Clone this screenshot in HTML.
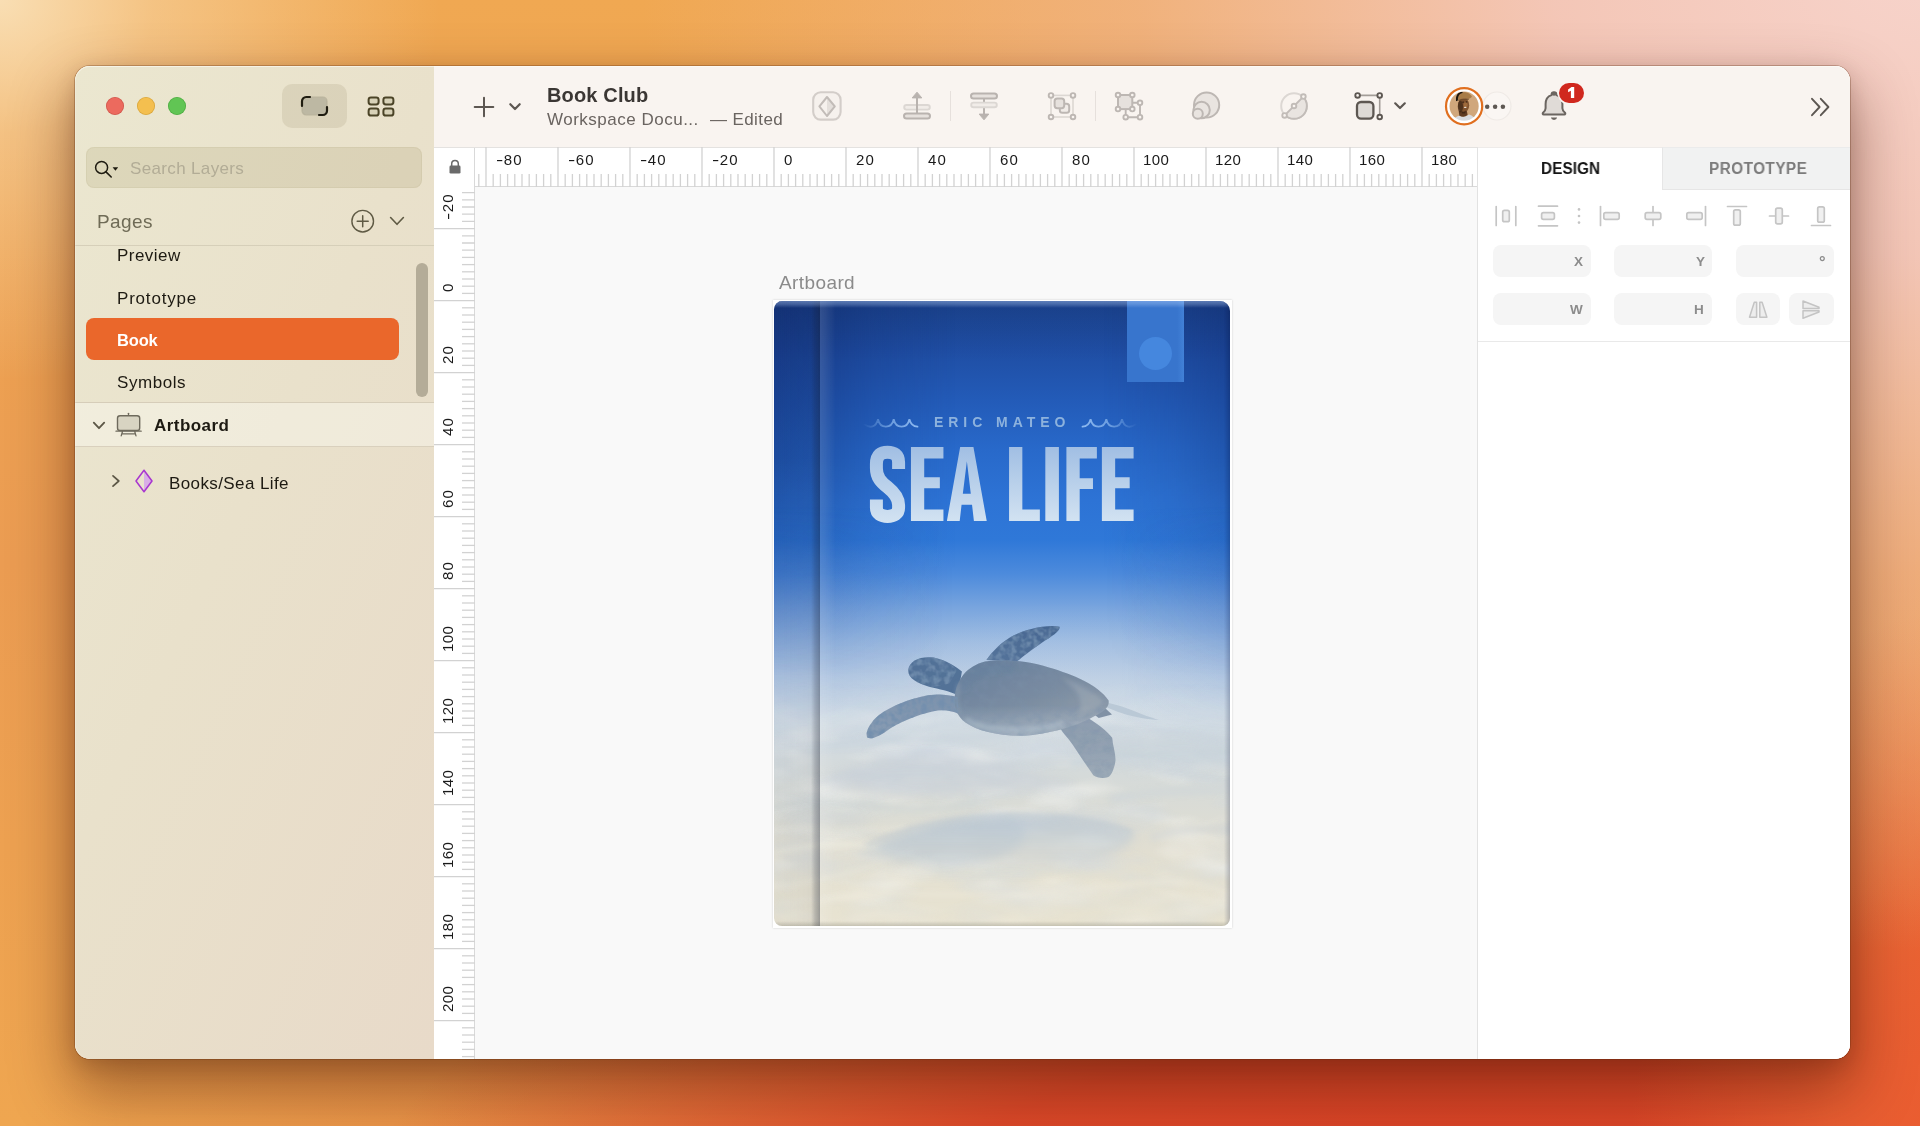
<!DOCTYPE html>
<html><head><meta charset="utf-8">
<style>
*{margin:0;padding:0;box-sizing:border-box}
html,body{width:1920px;height:1126px;overflow:hidden}
body{font-family:"Liberation Sans",sans-serif;position:relative;
background:
 radial-gradient(ellipse 440px 380px at 0px 0px,rgba(250,228,190,.9) 0%,rgba(250,228,190,.45) 35%,rgba(250,228,190,0) 100%),
 radial-gradient(ellipse 1300px 990px at 1940px -40px,#f7d4cc 0%,rgba(244,200,188,.95) 30%,rgba(241,184,150,.6) 62%,rgba(240,170,120,0) 100%),
 radial-gradient(ellipse 330px 560px at 1960px 1170px,#ea5c30 0%,rgba(234,96,50,.9) 40%,rgba(236,120,64,0) 100%),
 radial-gradient(ellipse 1050px 330px at 1420px 1190px,#da4226 0%,rgba(220,70,40,.95) 45%,rgba(224,84,44,0) 100%),
 radial-gradient(ellipse 1500px 700px at 1500px 1250px,rgba(226,96,48,.85) 0%,rgba(228,110,56,.5) 55%,rgba(230,120,60,0) 100%),
 linear-gradient(180deg,#f0a852 0%,#eb9c52 50%,#efa650 100%);
}
.abs{position:absolute}
#win{position:absolute;left:75px;top:66px;width:1775px;height:993px;border-radius:15px;
 box-shadow:0 0 0 1px rgba(90,40,10,.28),0 28px 60px 5px rgba(60,15,0,.42),0 6px 20px rgba(60,20,0,.17);}
#winin{position:absolute;inset:0;border-radius:15px;overflow:hidden;background:#fff}
#winin:after{content:"";position:absolute;inset:0;border-radius:15px;box-shadow:inset 0 1px 0 rgba(255,255,250,.55),inset 1px 0 0 rgba(255,255,250,.2);z-index:20;pointer-events:none}
/* sidebar */
#side{position:absolute;left:0;top:0;width:359px;height:993px;
 background:linear-gradient(115deg,#ebe7d0 0%,#e9e1cb 45%,#e8dac9 100%);}
#main{position:absolute;left:359px;top:0;right:0;height:993px;background:#f9f9f9}
#tb{position:absolute;left:0;top:0;right:0;height:81px;background:#f9f4f0}
.t{position:absolute;white-space:nowrap;line-height:1;will-change:transform}
</style></head>
<body>
<div id="win"><div id="winin">
<!--SIDEBAR-->
<div id="side">
<!-- traffic lights -->
<div class="abs" style="left:31px;top:30.700px;width:18.100px;height:18.100px;border-radius:50%;background:#ec6a5e;box-shadow:inset 0 0 0 .8px rgba(160,50,40,.35)"></div>
<div class="abs" style="left:62px;top:30.700px;width:18.100px;height:18.100px;border-radius:50%;background:#f4bf4f;box-shadow:inset 0 0 0 .8px rgba(170,120,20,.35)"></div>
<div class="abs" style="left:93px;top:30.700px;width:18.100px;height:18.100px;border-radius:50%;background:#61c554;box-shadow:inset 0 0 0 .8px rgba(40,130,30,.35)"></div>
<!-- view toggle -->
<div class="abs" style="left:207px;top:18px;width:65px;height:44px;border-radius:10px;background:rgba(120,110,70,.13)"></div>
<svg class="abs" style="left:224px;top:28px" width="31" height="24" viewBox="0 0 31 24">
 <rect x="3.2" y="3.2" width="24.600" height="17.600" rx="4.200" fill="#bdb8a3"/>
 <rect x="3" y="3" width="25" height="18" rx="4.200" fill="none" stroke="#a9a48e" stroke-width="1.200" opacity=".6"/>
 <path d="M11 3H7.200A4.200 4.200 0 0 0 3 7.200V12" fill="none" stroke="#1f1c10" stroke-width="2.200" stroke-linecap="round"/>
 <path d="M20 21H23.800A4.200 4.200 0 0 0 28 16.800V13" fill="none" stroke="#1f1c10" stroke-width="2.200" stroke-linecap="round"/>
</svg>
<svg class="abs" style="left:291px;top:29px" width="30" height="23" viewBox="0 0 30 23">
 <g fill="#d8d2b8" stroke="#4b4427" stroke-width="2">
 <rect x="2.6" y="2.4" width="10" height="7" rx="2.4"/><rect x="17.4" y="2.4" width="10" height="7" rx="2.4"/>
 <rect x="2.6" y="13.6" width="10" height="7" rx="2.4"/><rect x="17.4" y="13.6" width="10" height="7" rx="2.4"/></g>
</svg>
<!-- search -->
<div class="abs" style="left:11px;top:80.800px;width:336px;height:41.700px;border-radius:8px;background:rgba(150,135,80,.16);box-shadow:inset 0 0 0 1px rgba(140,125,80,.08)"></div>
<svg class="abs" style="left:18px;top:92px" width="30" height="22" viewBox="0 0 30 22">
 <circle cx="8.600" cy="9.400" r="6" fill="none" stroke="#1e1b10" stroke-width="1.500"/>
 <path d="M13 13.900L18.200 19" stroke="#1e1b10" stroke-width="1.600" stroke-linecap="round"/>
 <path d="M19.6 9.3h5.6l-2.8 3.4z" fill="#1e1b10"/>
</svg>
<div class="t" style="left:54.5px;top:93.5px;font-size:17px;letter-spacing:.35px;color:#b2ac96">Search Layers</div>
<!-- pages header -->
<div class="t" style="left:21.5px;top:146px;font-size:19px;letter-spacing:.4px;color:#6f6b56">Pages</div>
<svg class="abs" style="left:274px;top:142px" width="28" height="28" viewBox="0 0 28 28">
 <circle cx="13.7" cy="13.2" r="10.8" fill="none" stroke="#5f5a44" stroke-width="1.4"/>
 <path d="M13.7 7.7v11M8.2 13.2h11" stroke="#5f5a44" stroke-width="1.5" stroke-linecap="round"/>
</svg>
<svg class="abs" style="left:313px;top:149px" width="18" height="12" viewBox="0 0 18 12">
 <path d="M2.6 2.5L9 9.3L15.4 2.5" fill="none" stroke="#5f5a44" stroke-width="1.6" stroke-linecap="round" stroke-linejoin="round"/>
</svg>
<div class="abs" style="left:0;top:179px;width:359px;height:1px;background:#d6cfb9"></div>
<!-- pages list -->
<div class="t" style="left:41.800px;top:181.400px;font-size:17px;letter-spacing:.450px;color:#1d1a12">Preview</div>
<div class="t" style="left:41.800px;top:223.600px;font-size:17px;letter-spacing:.800px;color:#1d1a12">Prototype</div>
<div class="abs" style="left:11px;top:252px;width:312.5px;height:41.5px;border-radius:8px;background:#ea672b"></div>
<div class="t" style="left:41.800px;top:265.900px;font-size:16.500px;letter-spacing:-.150px;color:#fff;font-weight:bold">Book</div>
<div class="t" style="left:41.800px;top:307.700px;font-size:17px;letter-spacing:.570px;color:#1d1a12">Symbols</div>
<div class="abs" style="left:341px;top:197px;width:11.5px;height:134px;border-radius:6px;background:#b4ac98"></div>
<!-- layer list -->
<div class="abs" style="left:0;top:336px;width:359px;height:45px;background:rgba(255,255,250,.35);border-top:1px solid #d6cdb9;border-bottom:1px solid #d9d0bd"></div>
<svg class="abs" style="left:16px;top:353px" width="16" height="12" viewBox="0 0 16 12">
 <path d="M2.800 3.600L8 9.200L13.200 3.600" fill="none" stroke="#5c5746" stroke-width="1.800" stroke-linecap="round" stroke-linejoin="round"/>
</svg>
<svg class="abs" style="left:40px;top:346px" width="28" height="26" viewBox="0 0 28 26">
 <path d="M13.500 1.300v2.600" stroke="#6e6a5c" stroke-width="1.300" stroke-linecap="round"/>
 <rect x="2.500" y="3.700" width="22.200" height="14.800" rx="2.600" fill="#d8d4c2" stroke="#6e6a5c" stroke-width="1.400"/>
 <path d="M1 19.200H26.200M7.400 19.800L6.200 23.900M19.800 19.800l1.200 4.100M6.900 21.900h13.400" stroke="#6e6a5c" stroke-width="1.300" stroke-linecap="round" fill="none"/>
</svg>
<div class="t" style="left:78.5px;top:350.5px;font-size:17px;letter-spacing:.45px;color:#1d1a12;font-weight:bold">Artboard</div>
<svg class="abs" style="left:35px;top:408px" width="12" height="14" viewBox="0 0 12 14">
 <path d="M3 1.8L8.8 7L3 12.2" fill="none" stroke="#5c5746" stroke-width="1.7" stroke-linecap="round" stroke-linejoin="round"/>
</svg>
<svg class="abs" style="left:58px;top:402px" width="22" height="26" viewBox="0 0 22 26">
 <path d="M11 2.2L19 13L11 23.8z" fill="#d9aee6"/>
 <path d="M11 2.2L19 13L11 23.8L3 13z" fill="none" stroke="#a836cf" stroke-width="1.5" stroke-linejoin="round"/>
</svg>
<div class="t" style="left:93.700px;top:409px;font-size:17px;letter-spacing:.400px;color:#1d1a12">Books/Sea Life</div>
</div>
<!--MAIN-->
<div id="main">
<div id="tb">
<!-- plus -->
<svg class="abs" style="left:37.8px;top:28.6px" width="24" height="24" viewBox="0 0 24 24"><path d="M12 2.700v18.600M2.700 12h18.600" stroke="#5d5752" stroke-width="2" stroke-linecap="round"/></svg>
<svg class="abs" style="left:73.4px;top:34.8px" width="16" height="12" viewBox="0 0 16 12"><path d="M3.300 3.200L8 8L12.700 3.200" fill="none" stroke="#5d5752" stroke-width="2.200" stroke-linecap="round" stroke-linejoin="round"/></svg>
<div class="t" style="left:113px;top:19.3px;font-size:20px;font-weight:bold;letter-spacing:.15px;color:#3b3734">Book Club</div>
<div class="t" style="left:113px;top:45.2px;font-size:17px;letter-spacing:.5px;color:#6a6460">Workspace Docu...</div>
<div class="t" style="left:275.5px;top:45.2px;font-size:17px;letter-spacing:.4px;color:#6a6460">&mdash;&nbsp;Edited</div>
<svg class="abs" style="left:376px;top:23px" width="34" height="34" viewBox="0 0 34 34">
<rect x="3.2" y="3.2" width="27.4" height="27.4" rx="7.5" fill="#f6f1ed" stroke="#d3cdc9" stroke-width="2.1"/>
<path d="M17 8.2L24.6 17L17 27z" fill="#e4dfdb"/>
<path d="M17 8L24.8 17.4L17 27L9.4 17.4z" fill="none" stroke="#c2bcb8" stroke-width="2" stroke-linejoin="round"/>
</svg><svg class="abs" style="left:466px;top:23px" width="34" height="34" viewBox="0 0 34 34">
<rect x="4.2" y="16" width="25.6" height="4.6" rx="2.3" fill="#f1ece8" stroke="#dcd7d3" stroke-width="1.9"/>
<rect x="4" y="24.4" width="26" height="5.2" rx="2.6" fill="#e6e1dd" stroke="#b9b3af" stroke-width="2"/>
<path d="M17 8.5V24" stroke="#b9b3af" stroke-width="2"/>
<path d="M17 3.2L21.8 8.9H12.2z" fill="#b9b3af" stroke="#b9b3af" stroke-width="1" stroke-linejoin="round"/>
</svg><div class="abs" style="left:515.6px;top:25px;width:1.3px;height:30px;background:#e6e0dc"></div><svg class="abs" style="left:533px;top:23px" width="34" height="34" viewBox="0 0 34 34">
<path d="M17 9V26" stroke="#b9b3af" stroke-width="2"/>
<rect x="4.2" y="13.6" width="25.6" height="4.6" rx="2.3" fill="#f1ece8" stroke="#dcd7d3" stroke-width="1.9"/>
<rect x="4" y="4.4" width="26" height="5.2" rx="2.6" fill="#e6e1dd" stroke="#b9b3af" stroke-width="2"/>
<path d="M17 30.8L21.8 25.1H12.2z" fill="#b9b3af" stroke="#b9b3af" stroke-width="1" stroke-linejoin="round"/>
</svg><svg class="abs" style="left:611px;top:23px" width="34" height="34" viewBox="0 0 34 34">
<rect x="6" y="6.4" width="22" height="21.6" fill="none" stroke="#dcd7d3" stroke-width="1.6"/>
<rect x="14.8" y="14.8" width="9.4" height="9" rx="2.6" fill="#f1ece8" stroke="#bdb7b3" stroke-width="2"/>
<rect x="9.6" y="9.6" width="9.6" height="9.6" rx="2.6" fill="#e6e1dd" stroke="#bdb7b3" stroke-width="2"/>
<g fill="#f9f4f0" stroke="#bdb7b3" stroke-width="1.9"><circle cx="6" cy="6.4" r="2.3"/><circle cx="28" cy="6.4" r="2.3"/><circle cx="6" cy="28" r="2.3"/><circle cx="28" cy="28" r="2.3"/></g>
</svg><div class="abs" style="left:660.7px;top:25px;width:1.3px;height:30px;background:#e6e0dc"></div><svg class="abs" style="left:678px;top:23px" width="34" height="34" viewBox="0 0 34 34">
<path d="M20.3 13.8H28V28.2H13.7V20.1" fill="none" stroke="#bdb7b3" stroke-width="1.9"/>
<rect x="6" y="6" width="14.3" height="14.1" fill="#e6e1dd" stroke="#bdb7b3" stroke-width="2"/>
<g fill="#f9f4f0" stroke="#bdb7b3" stroke-width="1.9"><circle cx="6" cy="6" r="2.3"/><circle cx="20.3" cy="6" r="2.3"/><circle cx="6" cy="20.1" r="2.3"/><circle cx="20.3" cy="20.1" r="2.3"/>
<circle cx="28" cy="13.8" r="2.3"/><circle cx="28" cy="28.2" r="2.3"/><circle cx="13.7" cy="28.2" r="2.3"/></g>
</svg><svg class="abs" style="left:754.6px;top:23px" width="34" height="34" viewBox="0 0 34 34">
<g fill="#e9e4e0" stroke="#bdb7b3" stroke-width="2">
<circle cx="17.6" cy="16" r="12.6"/>
<circle cx="12.6" cy="21" r="8.2"/>
<circle cx="8.8" cy="24.8" r="5"/></g>
</svg><svg class="abs" style="left:843px;top:23px" width="34" height="34" viewBox="0 0 34 34">
<circle cx="17" cy="17" r="12.8" fill="none" stroke="#dcd7d3" stroke-width="2"/>
<path d="M7.9 26.1A12.8 12.8 0 0 0 26.1 7.9z" fill="#e9e4e0" stroke="#c2bcb8" stroke-width="2" stroke-linejoin="round"/>
<g fill="#f9f4f0" stroke="#c2bcb8" stroke-width="1.9"><circle cx="7.6" cy="26.4" r="2.3"/><circle cx="17" cy="17" r="2.3"/><circle cx="26.4" cy="7.6" r="2.3"/></g>
</svg><svg class="abs" style="left:918px;top:23px" width="34" height="34" viewBox="0 0 34 34">
<path d="M5.6 6.4H27.7V28" fill="none" stroke="#a39d98" stroke-width="1.6"/>
<rect x="5" y="13" width="16.4" height="16.6" rx="4" fill="#dedad6" stroke="#5d5752" stroke-width="2.3"/>
<g fill="#f9f4f0" stroke="#5d5752" stroke-width="1.9"><circle cx="5.6" cy="6.4" r="2.3"/><circle cx="27.7" cy="6.4" r="2.3"/><circle cx="27.7" cy="28" r="2.3"/></g>
</svg><svg class="abs" style="left:958px;top:34.2px" width="16" height="12" viewBox="0 0 16 12"><path d="M3.200 3.300L8 8L12.800 3.300" fill="none" stroke="#5d5752" stroke-width="2.200" stroke-linecap="round" stroke-linejoin="round"/></svg><svg class="abs" style="z-index:2;left:1009.1px;top:19.1px" width="42" height="42" viewBox="0 0 42 42">
<defs><clipPath id="avc"><circle cx="21.100" cy="21.100" r="14.600"/></clipPath><filter id="avb"><feGaussianBlur stdDeviation=".45"/></filter></defs>
<circle cx="21.100" cy="21.200" r="18.100" fill="#fff" stroke="#e06f1f" stroke-width="2.200"/>
<g clip-path="url(#avc)"><g filter="url(#avb)">
<rect x="0" y="0" width="42" height="42" fill="#d0a77c"/>
<path d="M9 38Q11 31.500 16.500 30.400Q21 33.200 26 29.600Q31.500 31 34 38Z" fill="#d8dbe0"/>
<path d="M15.700 26.300L23.800 25.200L24.600 30Q21 33 16.400 30.800Z" fill="#5e3b22"/>
<ellipse cx="20.600" cy="20.200" rx="5.600" ry="7.200" fill="#80532f"/>
<ellipse cx="17.400" cy="21.500" rx="2.600" ry="6" fill="#3f2515" opacity=".75"/>
<ellipse cx="22.600" cy="19.800" rx="2.100" ry="2.600" fill="#a8713f" opacity=".75"/>
<path d="M18.500 26Q20.500 27.600 23.200 25.600L22 28.500L19 28.500Z" fill="#3a2114" opacity=".8"/>
<path d="M13.500 15.200Q13 9 17 7.500Q21 6.200 25.500 8.300Q28.500 10 29 11.700Q27.500 13.200 26 13.700Q20 13.400 14.800 14.800Z" fill="#a87b47"/>
<path d="M15 14.800Q20 13.300 26 13.700L25.600 15Q20.500 14.800 15.500 16Z" fill="#6b4a2a" opacity=".8"/>
<path d="M13 16.200Q12.300 9.500 16.500 7.500Q18 6.800 19.700 6.700L19.400 8.100Q16.200 8.700 15.200 12Q14.700 13.800 14.900 15.600Z" fill="#1b1410"/>
<path d="M19.300 17.100h1.700M22.800 16.900h1.500" stroke="#26150c" stroke-width=".9"/>
<ellipse cx="22.200" cy="22.300" rx="1.400" ry=".65" fill="#efe6dc"/>
</g></g></svg><svg class="abs" style="left:1046.1px;top:23.4px" width="34" height="34" viewBox="0 0 34 34">
<circle cx="17" cy="17" r="14" fill="#faf6f3" stroke="#efeae6" stroke-width="1.200"/>
<g fill="#5e5853"><circle cx="7.200" cy="17.850" r="2.250"/><circle cx="15.100" cy="17.850" r="2.250"/><circle cx="22.900" cy="17.850" r="2.250"/></g>
</svg><svg class="abs" style="left:1102.8px;top:22px" width="34" height="36" viewBox="0 0 34 36">
<path d="M17 4.2c-1.5 0-2.4 1-2.4 2.3v.6C10.6 8.3 8.6 11.8 8.6 16v4.2c0 1.7-1 3.2-2.6 4.6-.6.6-.3 1.7.7 1.7h20.6c1 0 1.3-1.1.7-1.7-1.600-1.400-2.600-2.900-2.600-4.600V16c0-4.200-2-7.700-6-8.900v-.6c0-1.300-.9-2.300-2.400-2.300z" fill="#e0dbd7" stroke="#6b6560" stroke-width="2" stroke-linejoin="round"/>
<path d="M13.800 29.500a3.300 3.300 0 0 0 6.400 0z" fill="#6b6560"/><ellipse cx="17" cy="5.700" rx="2.400" ry="2" fill="#6b6560"/>
</svg>
<div class="abs" style="left:1125px;top:17.2px;width:24.5px;height:19.5px;border-radius:10px;background:#d0281e;box-shadow:0 0 0 1.5px #f9f4f0"></div>
<svg class="abs" style="left:1132px;top:19px" width="12" height="15" viewBox="0 0 12 15"><path d="M8.200 2.100V13H4.900V5.700L2.100 7.200V4.400L5.500 2.100Z" fill="#fff"/></svg>
<svg class="abs" style="left:1374.6px;top:29.6px" width="24" height="22" viewBox="0 0 24 22">
<path d="M3 2.8L10.600 11L3 19.200M11.800 2.800L19.400 11L11.800 19.200" fill="none" stroke="#5d5752" stroke-width="1.9" stroke-linecap="round" stroke-linejoin="round"/></svg>
<div class="abs" style="left:0;top:80.5px;width:1043px;height:40px;background:#fff;border-top:1px solid #e4e2e0;border-bottom:1.5px solid #d9d9d9"></div><div class="abs" style="left:0;top:120.5px;width:41px;height:873px;background:#fff;border-right:1.5px solid #d9d9d9"></div><div class="abs" style="left:0;top:81.5px;width:41px;height:39px;background:#fff;border-right:1.5px solid #d9d9d9"></div><svg class="abs" style="left:13.5px;top:92.8px" width="14" height="16" viewBox="0 0 14 16">
<path d="M3.700 7V4.800a3.300 3.300 0 0 1 6.600 0V7" fill="none" stroke="#6a6a6a" stroke-width="1.5"/>
<rect x="1.500" y="6.600" width="11" height="8" rx="1.300" fill="#6a6a6a"/></svg><svg class="abs" style="left:0;top:81px" width="1043" height="40" viewBox="0 0 1043 40"><g stroke="#d2d2d2" stroke-width="1.3"><path d="M44.8 27V40"/><path d="M52.0 0V40"/><path d="M59.2 27V40"/><path d="M66.4 27V40"/><path d="M73.6 27V40"/><path d="M80.8 27V40"/><path d="M88.0 27V40"/><path d="M95.2 27V40"/><path d="M102.4 27V40"/><path d="M109.6 27V40"/><path d="M116.8 27V40"/><path d="M124.0 0V40"/><path d="M131.2 27V40"/><path d="M138.4 27V40"/><path d="M145.6 27V40"/><path d="M152.8 27V40"/><path d="M160.0 27V40"/><path d="M167.2 27V40"/><path d="M174.4 27V40"/><path d="M181.6 27V40"/><path d="M188.8 27V40"/><path d="M196.0 0V40"/><path d="M203.2 27V40"/><path d="M210.4 27V40"/><path d="M217.6 27V40"/><path d="M224.8 27V40"/><path d="M232.0 27V40"/><path d="M239.2 27V40"/><path d="M246.4 27V40"/><path d="M253.6 27V40"/><path d="M260.8 27V40"/><path d="M268.0 0V40"/><path d="M275.2 27V40"/><path d="M282.4 27V40"/><path d="M289.6 27V40"/><path d="M296.8 27V40"/><path d="M304.0 27V40"/><path d="M311.2 27V40"/><path d="M318.4 27V40"/><path d="M325.6 27V40"/><path d="M332.8 27V40"/><path d="M340.0 0V40"/><path d="M347.2 27V40"/><path d="M354.4 27V40"/><path d="M361.6 27V40"/><path d="M368.8 27V40"/><path d="M376.0 27V40"/><path d="M383.2 27V40"/><path d="M390.4 27V40"/><path d="M397.6 27V40"/><path d="M404.8 27V40"/><path d="M412.0 0V40"/><path d="M419.2 27V40"/><path d="M426.4 27V40"/><path d="M433.6 27V40"/><path d="M440.8 27V40"/><path d="M448.0 27V40"/><path d="M455.2 27V40"/><path d="M462.4 27V40"/><path d="M469.6 27V40"/><path d="M476.8 27V40"/><path d="M484.0 0V40"/><path d="M491.2 27V40"/><path d="M498.4 27V40"/><path d="M505.6 27V40"/><path d="M512.8 27V40"/><path d="M520.0 27V40"/><path d="M527.2 27V40"/><path d="M534.4 27V40"/><path d="M541.6 27V40"/><path d="M548.8 27V40"/><path d="M556.0 0V40"/><path d="M563.2 27V40"/><path d="M570.4 27V40"/><path d="M577.6 27V40"/><path d="M584.8 27V40"/><path d="M592.0 27V40"/><path d="M599.2 27V40"/><path d="M606.4 27V40"/><path d="M613.6 27V40"/><path d="M620.8 27V40"/><path d="M628.0 0V40"/><path d="M635.2 27V40"/><path d="M642.4 27V40"/><path d="M649.6 27V40"/><path d="M656.8 27V40"/><path d="M664.0 27V40"/><path d="M671.2 27V40"/><path d="M678.4 27V40"/><path d="M685.6 27V40"/><path d="M692.8 27V40"/><path d="M700.0 0V40"/><path d="M707.2 27V40"/><path d="M714.4 27V40"/><path d="M721.6 27V40"/><path d="M728.8 27V40"/><path d="M736.0 27V40"/><path d="M743.2 27V40"/><path d="M750.4 27V40"/><path d="M757.6 27V40"/><path d="M764.8 27V40"/><path d="M772.0 0V40"/><path d="M779.2 27V40"/><path d="M786.4 27V40"/><path d="M793.6 27V40"/><path d="M800.8 27V40"/><path d="M808.0 27V40"/><path d="M815.2 27V40"/><path d="M822.4 27V40"/><path d="M829.6 27V40"/><path d="M836.8 27V40"/><path d="M844.0 0V40"/><path d="M851.2 27V40"/><path d="M858.4 27V40"/><path d="M865.6 27V40"/><path d="M872.8 27V40"/><path d="M880.0 27V40"/><path d="M887.2 27V40"/><path d="M894.4 27V40"/><path d="M901.6 27V40"/><path d="M908.8 27V40"/><path d="M916.0 0V40"/><path d="M923.2 27V40"/><path d="M930.4 27V40"/><path d="M937.6 27V40"/><path d="M944.8 27V40"/><path d="M952.0 27V40"/><path d="M959.2 27V40"/><path d="M966.4 27V40"/><path d="M973.6 27V40"/><path d="M980.8 27V40"/><path d="M988.0 0V40"/><path d="M995.2 27V40"/><path d="M1002.4 27V40"/><path d="M1009.6 27V40"/><path d="M1016.8 27V40"/><path d="M1024.0 27V40"/><path d="M1031.2 27V40"/><path d="M1038.4 27V40"/></g></svg><svg class="abs" style="left:0;top:121px" width="41" height="873" viewBox="0 0 41 873"><g stroke="#d2d2d2" stroke-width="1.3"><path d="M28 5.6H41"/><path d="M28 12.8H41"/><path d="M28 20.0H41"/><path d="M28 27.2H41"/><path d="M28 34.4H41"/><path d="M0 41.6H41"/><path d="M28 48.8H41"/><path d="M28 56.0H41"/><path d="M28 63.2H41"/><path d="M28 70.4H41"/><path d="M28 77.6H41"/><path d="M28 84.8H41"/><path d="M28 92.0H41"/><path d="M28 99.2H41"/><path d="M28 106.4H41"/><path d="M0 113.6H41"/><path d="M28 120.8H41"/><path d="M28 128.0H41"/><path d="M28 135.2H41"/><path d="M28 142.4H41"/><path d="M28 149.6H41"/><path d="M28 156.8H41"/><path d="M28 164.0H41"/><path d="M28 171.2H41"/><path d="M28 178.4H41"/><path d="M0 185.6H41"/><path d="M28 192.8H41"/><path d="M28 200.0H41"/><path d="M28 207.2H41"/><path d="M28 214.4H41"/><path d="M28 221.6H41"/><path d="M28 228.8H41"/><path d="M28 236.0H41"/><path d="M28 243.2H41"/><path d="M28 250.4H41"/><path d="M0 257.6H41"/><path d="M28 264.8H41"/><path d="M28 272.0H41"/><path d="M28 279.2H41"/><path d="M28 286.4H41"/><path d="M28 293.6H41"/><path d="M28 300.8H41"/><path d="M28 308.0H41"/><path d="M28 315.2H41"/><path d="M28 322.4H41"/><path d="M0 329.6H41"/><path d="M28 336.8H41"/><path d="M28 344.0H41"/><path d="M28 351.2H41"/><path d="M28 358.4H41"/><path d="M28 365.6H41"/><path d="M28 372.8H41"/><path d="M28 380.0H41"/><path d="M28 387.2H41"/><path d="M28 394.4H41"/><path d="M0 401.6H41"/><path d="M28 408.8H41"/><path d="M28 416.0H41"/><path d="M28 423.2H41"/><path d="M28 430.4H41"/><path d="M28 437.6H41"/><path d="M28 444.8H41"/><path d="M28 452.0H41"/><path d="M28 459.2H41"/><path d="M28 466.4H41"/><path d="M0 473.6H41"/><path d="M28 480.8H41"/><path d="M28 488.0H41"/><path d="M28 495.2H41"/><path d="M28 502.4H41"/><path d="M28 509.6H41"/><path d="M28 516.8H41"/><path d="M28 524.0H41"/><path d="M28 531.2H41"/><path d="M28 538.4H41"/><path d="M0 545.6H41"/><path d="M28 552.8H41"/><path d="M28 560.0H41"/><path d="M28 567.2H41"/><path d="M28 574.4H41"/><path d="M28 581.6H41"/><path d="M28 588.8H41"/><path d="M28 596.0H41"/><path d="M28 603.2H41"/><path d="M28 610.4H41"/><path d="M0 617.6H41"/><path d="M28 624.8H41"/><path d="M28 632.0H41"/><path d="M28 639.2H41"/><path d="M28 646.4H41"/><path d="M28 653.6H41"/><path d="M28 660.8H41"/><path d="M28 668.0H41"/><path d="M28 675.2H41"/><path d="M28 682.4H41"/><path d="M0 689.6H41"/><path d="M28 696.8H41"/><path d="M28 704.0H41"/><path d="M28 711.2H41"/><path d="M28 718.4H41"/><path d="M28 725.6H41"/><path d="M28 732.8H41"/><path d="M28 740.0H41"/><path d="M28 747.2H41"/><path d="M28 754.4H41"/><path d="M0 761.6H41"/><path d="M28 768.8H41"/><path d="M28 776.0H41"/><path d="M28 783.2H41"/><path d="M28 790.4H41"/><path d="M28 797.6H41"/><path d="M28 804.8H41"/><path d="M28 812.0H41"/><path d="M28 819.2H41"/><path d="M28 826.4H41"/><path d="M0 833.6H41"/><path d="M28 840.8H41"/><path d="M28 848.0H41"/><path d="M28 855.2H41"/><path d="M28 862.4H41"/><path d="M28 869.6H41"/></g></svg><div class="t" style="left:62px;top:86.3px;font-size:15px;letter-spacing:1.1px;color:#1a1a1a"><span style="display:inline-block;transform:scaleX(1.450);transform-origin:0 50%;letter-spacing:2.700px">-</span>80</div><div class="t" style="left:134px;top:86.3px;font-size:15px;letter-spacing:1.1px;color:#1a1a1a"><span style="display:inline-block;transform:scaleX(1.450);transform-origin:0 50%;letter-spacing:2.700px">-</span>60</div><div class="t" style="left:206px;top:86.3px;font-size:15px;letter-spacing:1.1px;color:#1a1a1a"><span style="display:inline-block;transform:scaleX(1.450);transform-origin:0 50%;letter-spacing:2.700px">-</span>40</div><div class="t" style="left:278px;top:86.3px;font-size:15px;letter-spacing:1.1px;color:#1a1a1a"><span style="display:inline-block;transform:scaleX(1.450);transform-origin:0 50%;letter-spacing:2.700px">-</span>20</div><div class="t" style="left:350px;top:86.3px;font-size:15px;letter-spacing:1.1px;color:#1a1a1a">0</div><div class="t" style="left:422px;top:86.3px;font-size:15px;letter-spacing:1.1px;color:#1a1a1a">20</div><div class="t" style="left:494px;top:86.3px;font-size:15px;letter-spacing:1.1px;color:#1a1a1a">40</div><div class="t" style="left:566px;top:86.3px;font-size:15px;letter-spacing:1.1px;color:#1a1a1a">60</div><div class="t" style="left:638px;top:86.3px;font-size:15px;letter-spacing:1.1px;color:#1a1a1a">80</div><div class="t" style="left:709.20px;top:86.3px;font-size:15px;letter-spacing:.450px;color:#1a1a1a">100</div><div class="t" style="left:781.20px;top:86.3px;font-size:15px;letter-spacing:.450px;color:#1a1a1a">120</div><div class="t" style="left:853.20px;top:86.3px;font-size:15px;letter-spacing:.450px;color:#1a1a1a">140</div><div class="t" style="left:925.20px;top:86.3px;font-size:15px;letter-spacing:.450px;color:#1a1a1a">160</div><div class="t" style="left:997.20px;top:86.3px;font-size:15px;letter-spacing:.450px;color:#1a1a1a">180</div><div class="t" style="left:6px;top:154.1px;font-size:15px;letter-spacing:1.1px;color:#1a1a1a;transform-origin:0 0;transform:rotate(-90deg)"><span style="display:inline-block;transform:scaleX(1.450);transform-origin:0 50%;letter-spacing:2.700px">-</span>20</div><div class="t" style="left:6px;top:226.1px;font-size:15px;letter-spacing:1.1px;color:#1a1a1a;transform-origin:0 0;transform:rotate(-90deg)">0</div><div class="t" style="left:6px;top:298.1px;font-size:15px;letter-spacing:1.1px;color:#1a1a1a;transform-origin:0 0;transform:rotate(-90deg)">20</div><div class="t" style="left:6px;top:370.1px;font-size:15px;letter-spacing:1.1px;color:#1a1a1a;transform-origin:0 0;transform:rotate(-90deg)">40</div><div class="t" style="left:6px;top:442.1px;font-size:15px;letter-spacing:1.1px;color:#1a1a1a;transform-origin:0 0;transform:rotate(-90deg)">60</div><div class="t" style="left:6px;top:514.1px;font-size:15px;letter-spacing:1.1px;color:#1a1a1a;transform-origin:0 0;transform:rotate(-90deg)">80</div><div class="t" style="left:6px;top:586.1px;font-size:15px;letter-spacing:.450px;color:#1a1a1a;transform-origin:0 0;transform:rotate(-90deg)">100</div><div class="t" style="left:6px;top:658.1px;font-size:15px;letter-spacing:.450px;color:#1a1a1a;transform-origin:0 0;transform:rotate(-90deg)">120</div><div class="t" style="left:6px;top:730.1px;font-size:15px;letter-spacing:.450px;color:#1a1a1a;transform-origin:0 0;transform:rotate(-90deg)">140</div><div class="t" style="left:6px;top:802.1px;font-size:15px;letter-spacing:.450px;color:#1a1a1a;transform-origin:0 0;transform:rotate(-90deg)">160</div><div class="t" style="left:6px;top:874.1px;font-size:15px;letter-spacing:.450px;color:#1a1a1a;transform-origin:0 0;transform:rotate(-90deg)">180</div><div class="t" style="left:6px;top:946.1px;font-size:15px;letter-spacing:.450px;color:#1a1a1a;transform-origin:0 0;transform:rotate(-90deg)">200</div><div class="t" style="left:344.5px;top:207px;font-size:19px;letter-spacing:.4px;color:#8b8b8b">Artboard</div><div class="abs" style="left:338.5px;top:233.5px;width:459px;height:628px;background:#fff;box-shadow:0 0 2px rgba(0,0,0,.18)"></div><div id="book" class="abs" style="left:340px;top:235px;width:456px;height:625px"><div class="abs" style="inset:0;border-radius:8.500px 10px 8px 8px;overflow:hidden;background:linear-gradient(180deg,#1c458f 0%,#1f4ea4 7.800%,#235bb8 15.800%,#2869ca 23.800%,#2d73d5 31.800%,#2f78d8 38.200%,#4d8bdc 43.700%,#79a5de 49.100%,#a0bde1 54.700%,#bccee3 60.200%,#d1dce5 65.600%,#d2dadf 71.200%,#d5dad9 76%,#dbdcd5 82%,#e1ded1 88%,#e5e1d1 93%,#e8e3d1 100%)">
<!--vignette-->
<div class="abs" style="inset:0;background:linear-gradient(90deg,rgba(8,25,85,.36) 0%,rgba(8,25,85,.26) 11%,rgba(8,25,85,.12) 22%,rgba(8,25,85,0) 40%,rgba(8,25,85,0) 72%,rgba(8,25,85,.10) 88%,rgba(8,25,85,.24) 100%);-webkit-mask-image:linear-gradient(180deg,#000 0%,#000 25%,transparent 60%);mask-image:linear-gradient(180deg,#000 0%,#000 25%,transparent 60%)"></div>
<div class="abs" style="left:0;top:0;width:456px;height:60px;background:linear-gradient(180deg,rgba(8,25,85,.12),rgba(8,25,85,0))"></div>
<!--edge blue in transition zone-->
<div class="abs" style="left:0;top:205px;width:170px;height:250px;background:linear-gradient(90deg,rgba(36,100,205,.15) 0%,rgba(36,100,205,.11) 30%,rgba(36,100,205,0) 100%);-webkit-mask-image:linear-gradient(180deg,transparent 0%,#000 32%,#000 55%,transparent 100%);mask-image:linear-gradient(180deg,transparent 0%,#000 32%,#000 55%,transparent 100%)"></div>
<div class="abs" style="right:0;top:205px;width:110px;height:230px;background:linear-gradient(270deg,rgba(36,100,205,.15) 0%,rgba(36,100,205,.09) 35%,rgba(36,100,205,0) 100%);-webkit-mask-image:linear-gradient(180deg,transparent 0%,#000 32%,#000 55%,transparent 100%);mask-image:linear-gradient(180deg,transparent 0%,#000 32%,#000 55%,transparent 100%)"></div>
<!--soft bright haze behind turtle-->
<div class="abs" style="left:120px;top:300px;width:336px;height:150px;background:radial-gradient(ellipse 50% 50% at 50% 50%,rgba(222,232,242,.10) 0%,rgba(222,232,242,0) 100%)"></div>
<svg class="abs" style="left:0;top:380px" width="456" height="245" viewBox="0 0 456 245">
<defs>
<filter id="dn" x="0" y="0" width="100%" height="100%">
<feTurbulence type="fractalNoise" baseFrequency=".011 .034" numOctaves="3" seed="11" result="n"/>
<feColorMatrix in="n" type="matrix" values="0 0 0 0 .62  0 0 0 0 .69  0 0 0 0 .78  0 0 0 2.600 -1.060"/>
<feGaussianBlur stdDeviation="1.600"/>
</filter>
<filter id="dn2" x="0" y="0" width="100%" height="100%">
<feTurbulence type="fractalNoise" baseFrequency=".013 .04" numOctaves="3" seed="29" result="n"/>
<feColorMatrix in="n" type="matrix" values="0 0 0 0 .97  0 0 0 0 .96  0 0 0 0 .91  0 0 0 2.600 -1.150"/>
<feGaussianBlur stdDeviation="1.400"/>
</filter>
<linearGradient id="dmk" x1="0" y1="0" x2="0" y2="1"><stop offset="0" stop-color="#fff" stop-opacity="0"/><stop offset=".3" stop-color="#fff" stop-opacity="1"/><stop offset=".85" stop-color="#fff" stop-opacity=".8"/><stop offset="1" stop-color="#fff" stop-opacity=".4"/></linearGradient>
<mask id="dm"><rect width="456" height="245" fill="url(#dmk)"/></mask>
</defs>
<g mask="url(#dm)">
<rect width="456" height="245" filter="url(#dn)" opacity=".42"/>
<rect width="456" height="245" filter="url(#dn2)" opacity=".42"/>
</g>
</svg>
<svg class="abs" style="left:0;top:330px" width="456" height="295" viewBox="0 0 456 295">
<defs><filter id="b6" x="-20%" y="-50%" width="140%" height="200%"><feGaussianBlur stdDeviation="5"/></filter>
<filter id="b3" x="-20%" y="-80%" width="140%" height="260%"><feGaussianBlur stdDeviation="2.500"/></filter>
<linearGradient id="shg" x1="0" y1="0" x2="0" y2="1"><stop offset="0" stop-color="#b6c4d2" stop-opacity=".8"/><stop offset=".6" stop-color="#c2cdd6" stop-opacity=".45"/><stop offset="1" stop-color="#c8d2d8" stop-opacity=".08"/></linearGradient></defs>
<!-- dunes -->
<g filter="url(#b3)" fill="none" stroke-linecap="round">
<path d="M50 118C110 100 170 112 230 104S360 92 456 110" stroke="#c6d2de" stroke-width="7" opacity=".35"/>
<path d="M46 150C100 132 150 146 215 136S330 128 456 150" stroke="#ccd4da" stroke-width="8" opacity=".4"/>
<path d="M0 176C60 160 130 190 200 172" stroke="#cfd4d2" stroke-width="7" opacity=".45"/>
<path d="M300 132C350 118 400 126 456 120" stroke="#c6d1da" stroke-width="8" opacity=".4"/>
<path d="M340 168C380 158 420 162 456 158" stroke="#cdd5da" stroke-width="8" opacity=".4"/>
<path d="M0 222C60 206 110 214 160 232" stroke="#efeddf" stroke-width="4" opacity=".6"/>
<path d="M0 256C50 250 90 240 140 218" stroke="#efeddf" stroke-width="3" opacity=".5"/>
<path d="M46 270C130 254 220 272 320 258S420 254 456 262" stroke="#efecdc" stroke-width="5" opacity=".4"/>
<path d="M0 200C40 190 90 204 130 196" stroke="#eeecde" stroke-width="4" opacity=".5"/>
<path d="M380 206C410 196 440 200 456 196" stroke="#cfd5d6" stroke-width="8" opacity=".4"/>
</g>
<!-- dune shading -->
<g filter="url(#b6)">
<path d="M46 150C90 128 150 118 200 128C240 136 270 150 300 152C250 160 200 158 150 162C110 164 70 160 46 150Z" fill="#c3cdd6" opacity=".45"/>
<path d="M300 120C340 104 400 100 456 108V140C410 132 350 132 300 120Z" fill="#c5cfd8" opacity=".4"/>
<path d="M0 190C30 176 70 176 100 190C70 204 30 204 0 190Z" fill="#cfd3d0" opacity=".4"/>
</g>
<!-- turtle shadow -->
<path d="M81 223C120 200 180 186 237 184C290 184 330 190 362 203C352 226 300 240 240 242C180 244 110 240 81 223Z" fill="url(#shg)" filter="url(#b6)"/>
<path d="M100 216C140 194 190 186 240 186C262 200 250 226 200 232C150 236 115 230 100 216Z" fill="#b3c2d0" opacity=".35" filter="url(#b6)"/>
<path d="M92 214C130 196 185 185 237 184C290 184 330 190 358 201" fill="none" stroke="#aebdce" stroke-width="3" opacity=".4" filter="url(#b3)"/>
</svg>
<svg class="abs" style="left:76px;top:299px;opacity:.93" width="340" height="200" viewBox="0 0 1914 1126">
<defs>
<filter id="tb" x="-10%" y="-10%" width="120%" height="120%"><feGaussianBlur stdDeviation="5"/></filter>
<filter id="tb2" x="-10%" y="-10%" width="120%" height="120%"><feGaussianBlur stdDeviation="11"/></filter>
<filter id="tn" x="0" y="0" width="100%" height="100%">
 <feTurbulence type="fractalNoise" baseFrequency=".018 .022" numOctaves="3" seed="7" result="n"/>
 <feColorMatrix in="n" type="matrix" values="0 0 0 0 .18  0 0 0 0 .26  0 0 0 0 .38  1.6 0 0 0 -.62" result="c"/>
 <feComposite in="c" in2="SourceGraphic" operator="in"/>
 <feGaussianBlur stdDeviation="3"/>
</filter>
<filter id="tn2" x="0" y="0" width="100%" height="100%">
 <feTurbulence type="fractalNoise" baseFrequency=".03 .03" numOctaves="2" seed="3" result="n"/>
 <feColorMatrix in="n" type="matrix" values="0 0 0 0 .15  0 0 0 0 .25  0 0 0 0 .40  2.600 0 0 0 -.950" result="c"/>
 <feComposite in="c" in2="SourceGraphic" operator="in"/>
 <feGaussianBlur stdDeviation="2.500"/>
</filter>
<linearGradient id="shell" x1="0" y1="0" x2="1" y2="1"><stop offset="0" stop-color="#5f7896"/><stop offset=".5" stop-color="#74869c"/><stop offset="1" stop-color="#949fab"/></linearGradient>
<linearGradient id="shellb" x1="0" y1="0" x2="0" y2="1"><stop offset=".6" stop-color="#b3c2d0" stop-opacity="0"/><stop offset="1" stop-color="#aebdcc" stop-opacity=".6"/></linearGradient>
<linearGradient id="rearf" x1="0" y1="0" x2="0" y2="1"><stop offset="0" stop-color="#8696aa"/><stop offset="1" stop-color="#98a6b4"/></linearGradient>
<linearGradient id="lowf" x1="1" y1="0" x2="0" y2="1"><stop offset="0" stop-color="#768ca8"/><stop offset="1" stop-color="#8297b0"/></linearGradient>
<linearGradient id="upf" x1="0" y1="1" x2="1" y2="0"><stop offset="0" stop-color="#4f6e96"/><stop offset="1" stop-color="#3f5f8a"/></linearGradient>
</defs>
<g filter="url(#tb)">
<path d="M1430 575C1500 585 1580 615 1640 642C1680 658 1720 668 1738 676C1680 672 1600 658 1540 640C1500 628 1460 612 1436 600Z" fill="#b9c7d5"/>
<path d="M1370 640L1440 612L1475 645L1400 664Z" fill="#7a8ba0"/>
<path d="M768 338C800 290 860 230 920 200C1000 162 1100 138 1180 150C1184 176 1140 202 1080 240C1020 280 975 318 938 346Z" fill="url(#upf)"/>
<path d="M1185 725C1230 700 1290 670 1340 664C1400 700 1450 740 1476 776C1480 830 1502 880 1492 920C1482 962 1470 990 1450 998C1420 1006 1390 1000 1370 986C1330 930 1290 870 1250 810C1226 776 1200 750 1185 725Z" fill="url(#rearf)"/>
<path d="M606 548C540 528 470 528 400 544C300 568 200 610 140 668C104 708 84 750 98 776C130 788 180 756 230 720C300 680 380 646 470 626C520 616 570 622 612 642Z" fill="url(#lowf)"/>
<path d="M328 396C332 340 400 314 470 324C540 338 600 378 630 402L606 536C560 512 500 502 450 490C380 470 326 442 328 396Z" fill="#4b6b92"/>
<path d="M590 540C598 450 660 370 760 346C860 330 1000 340 1120 380C1260 420 1400 480 1456 566C1462 600 1430 630 1380 652C1300 700 1150 750 1000 763C850 770 720 740 650 690C600 650 584 600 590 540Z" fill="url(#shell)"/>
<path d="M590 540C598 450 660 370 760 346C860 330 1000 340 1120 380C1260 420 1400 480 1456 566C1462 600 1430 630 1380 652C1300 700 1150 750 1000 763C850 770 720 740 650 690C600 650 584 600 590 540Z" fill="url(#shellb)"/>
</g>
<!-- noise mottling on flippers/head (strong) and shell (soft) -->
<g filter="url(#tn2)" opacity=".9">
<path d="M768 338C800 290 860 230 920 200C1000 162 1100 138 1180 150C1184 176 1140 202 1080 240C1020 280 975 318 938 346Z"/>
<path d="M606 548C540 528 470 528 400 544C300 568 200 610 140 668C104 708 84 750 98 776C130 788 180 756 230 720C300 680 380 646 470 626C520 616 570 622 612 642Z"/>
<path d="M328 396C332 340 400 314 470 324C540 338 590 370 600 400L560 470C520 480 480 490 450 490C380 470 326 442 328 396Z"/>
</g>
<g filter="url(#tn)" opacity=".55">
<path d="M590 540C598 450 660 370 760 346C860 330 1000 340 1120 380C1260 420 1400 480 1456 566C1462 600 1430 630 1380 652C1300 700 1150 750 1000 763C850 770 720 740 650 690C600 650 584 600 590 540Z"/>
<path d="M1185 725C1230 700 1290 670 1340 664C1400 700 1450 740 1476 776C1480 830 1502 880 1492 920C1482 962 1470 990 1450 998C1420 1006 1390 1000 1370 986C1330 930 1290 870 1250 810C1226 776 1200 750 1185 725Z"/>
</g>
<!-- shell shading -->
<g filter="url(#tb2)">
<path d="M630 500C680 410 800 372 920 384" fill="none" stroke="#5f7a9c" stroke-width="44" opacity=".4"/>
<path d="M1180 430C1290 470 1380 520 1430 575C1390 610 1340 630 1290 640C1320 560 1270 490 1180 430Z" fill="#aab3ba" opacity=".38"/>
<path d="M650 672C770 742 1000 752 1200 692" fill="none" stroke="#b7c6d4" stroke-width="22" opacity=".55"/>
<path d="M612 470C600 520 596 580 616 640" fill="none" stroke="#a9b9c9" stroke-width="10" opacity=".5"/>
</g>
</svg>
<!--spine-->
<div class="abs" style="left:0;top:0;width:46px;height:625px;background:linear-gradient(90deg,rgba(30,40,70,.03) 0%,rgba(30,40,70,.05) 70%,rgba(20,30,60,.09) 100%)"></div>
<div class="abs" style="left:37px;top:0;width:9px;height:625px;background:linear-gradient(90deg,rgba(20,25,40,0),rgba(20,25,40,.16) 45%,rgba(20,25,40,.3) 100%)"></div>
<div class="abs" style="left:46px;top:0;width:16px;height:625px;background:linear-gradient(90deg,rgba(255,255,255,.13) 0%,rgba(255,255,255,.1) 25%,rgba(255,255,255,0) 100%)"></div>
<!--ribbon-->
<div class="abs" style="left:353px;top:0;width:57px;height:81px;background:linear-gradient(90deg,#3875cd 0%,#3875cd 88%,#4281d7 100%)"></div>
<div class="abs" style="left:364.900px;top:36.100px;width:33px;height:33px;border-radius:50%;background:#4587de"></div>
<svg class="abs" style="left:0;top:0" width="456" height="625" viewBox="0 0 456 625">
<defs>
<linearGradient id="tg" x1="0" y1="0" x2="0" y2="1"><stop offset="0" stop-color="#a0bee3"/><stop offset="1" stop-color="#d3e3f2"/></linearGradient>
<linearGradient id="wl" x1="0" y1="0" x2="1" y2="0"><stop offset="0" stop-color="#86b4ec" stop-opacity=".05"/><stop offset=".45" stop-color="#86b4ec" stop-opacity=".7"/><stop offset="1" stop-color="#8fbaf0" stop-opacity="1"/></linearGradient>
<linearGradient id="wr" x1="1" y1="0" x2="0" y2="0"><stop offset="0" stop-color="#86b4ec" stop-opacity=".05"/><stop offset=".45" stop-color="#86b4ec" stop-opacity=".7"/><stop offset="1" stop-color="#8fbaf0" stop-opacity="1"/></linearGradient>
<linearGradient id="tgs" gradientUnits="userSpaceOnUse" x1="0" y1="293" x2="0" y2="786"><stop offset="0" stop-color="#a0bee3"/><stop offset="1" stop-color="#d3e3f2"/></linearGradient>
</defs>
<g transform="translate(-774 -301)" fill="none" stroke-width="1.800" stroke-linecap="round" stroke-linejoin="miter">
<path id="wave" d="M864.500 424.600C870 428.300 876 427.500 878 419.200C880 429 891.700 429 893.700 419.200C895.700 429 907.400 429 909.400 419.200C910.600 424 913 426.500 917.500 426.700" stroke="url(#wl)"/>
<path d="M1135.500 424.600C1130 428.300 1124 427.500 1122 419.200C1120 429 1108.300 429 1106.300 419.200C1104.300 429 1092.600 429 1090.600 419.200C1089.400 424 1087 426.500 1082.500 426.700" stroke="url(#wr)"/>
</g>
<g transform="translate(76 99) scale(0.15625)" fill="url(#tgs)">
<path d="M311 442V400C311 350 280 334 240 334C200 334 169 350 169 410V436C169 496 200 526 240 558C280 590 311 622 311 672V690C311 730 280 745 240 745C200 745 169 730 169 690V636" fill="none" stroke="url(#tgs)" stroke-width="83"/>
<path d="M390 300H598V375H475V495H575V565H475V700H598V775H390Z"/>
<path fill-rule="evenodd" d="M620 775L705 300H790L875 775H793L781 670H714L702 775ZM722 600H773L748 392Z"/>
<path d="M1018 300H1103V700H1215V775H1018Z"/>
<path d="M1250 300H1337V775H1250Z"/>
<path d="M1385 300H1580V375H1470V500H1555V570H1470V775H1385Z"/>
<path d="M1612 300H1815V375H1697V495H1790V565H1697V700H1815V775H1612Z"/>
</g>
</svg>
<div class="t" style="left:160.200px;top:114.300px;font-size:14px;font-weight:bold;letter-spacing:4.950px;color:#8db2dd">ERIC MATEO</div>

<!--edges-->
<div class="abs" style="left:0;top:0;width:456px;height:7px;background:linear-gradient(180deg,rgba(190,215,255,.42),rgba(190,215,255,.28) 45%,rgba(190,215,255,0))"></div>
<div class="abs" style="right:0;top:0;width:6px;height:625px;background:linear-gradient(90deg,rgba(0,10,50,0),rgba(0,10,50,.22))"></div>
<div class="abs" style="left:0;bottom:0;width:456px;height:5px;background:linear-gradient(180deg,rgba(60,60,50,0),rgba(60,60,50,.2))"></div>
</div></div><div id="insp" class="abs" style="left:1042.5px;top:81px;width:373px;height:912px;background:#fff;border-left:1.5px solid #e2e2e2"><div class="abs" style="left:184.5px;top:0;width:188px;height:42.5px;background:#f1f2f2;border-left:1px solid #e6e6e6;border-bottom:1px solid #e6e6e6;border-top:1px solid #ebebeb"></div><div class="abs" style="left:0;top:0;width:184.5px;height:1px;background:#eeebe9"></div><div class="t" style="left:63.2px;top:13.5px;font-size:16px;font-weight:bold;letter-spacing:.1px;color:#141414;transform-origin:0 0;transform:scaleX(.955)">DESIGN</div><div class="t" style="left:231.8px;top:13.5px;font-size:16px;font-weight:bold;letter-spacing:.5px;color:#7b7b7b;transform-origin:0 0;transform:scaleX(.955)">PROTOTYPE</div><svg class="abs" style="left:16.5px;top:57px" width="24" height="24" viewBox="0 0 24 24" fill="none" stroke="#c5c5c5" stroke-width="1.700" stroke-linecap="round"><path d="M2.200 2.500v19M21.800 2.500v19"/><rect x="8.700" y="6.300" width="6.600" height="11.400" rx="1.800" fill="#f0f0f0"/></svg><svg class="abs" style="left:58.7px;top:57px" width="24" height="24" viewBox="0 0 24 24" fill="none" stroke="#c5c5c5" stroke-width="1.700" stroke-linecap="round"><path d="M2.500 2.200h19M2.500 21.800h19"/><rect x="5.600" y="8.700" width="12.800" height="6.600" rx="1.800" fill="#f0f0f0"/></svg><svg class="abs" style="left:98.8px;top:59px" width="6" height="20" viewBox="0 0 6 20" fill="#c4c4c4"><circle cx="3" cy="3.400" r="1.300"/><circle cx="3" cy="10" r="1.300"/><circle cx="3" cy="16.600" r="1.300"/></svg><svg class="abs" style="left:120px;top:57px" width="24" height="24" viewBox="0 0 24 24" fill="none" stroke="#c5c5c5" stroke-width="1.700" stroke-linecap="round"><path d="M2.500 2.500v19"/><rect x="5.800" y="8.700" width="15.400" height="6.600" rx="1.800" fill="#f0f0f0"/></svg><svg class="abs" style="left:163px;top:57px" width="24" height="24" viewBox="0 0 24 24" fill="none" stroke="#c5c5c5" stroke-width="1.700" stroke-linecap="round"><path d="M12 2.500v19"/><rect x="4.200" y="8.700" width="15.600" height="6.600" rx="1.800" fill="#f0f0f0"/></svg><svg class="abs" style="left:206px;top:57px" width="24" height="24" viewBox="0 0 24 24" fill="none" stroke="#c5c5c5" stroke-width="1.700" stroke-linecap="round"><path d="M21.500 2.500v19"/><rect x="2.800" y="8.700" width="15.400" height="6.600" rx="1.800" fill="#f0f0f0"/></svg><svg class="abs" style="left:247px;top:57px" width="24" height="24" viewBox="0 0 24 24" fill="none" stroke="#c5c5c5" stroke-width="1.700" stroke-linecap="round"><path d="M2.500 2.500h19"/><rect x="8.700" y="5.800" width="6.600" height="15.400" rx="1.800" fill="#f0f0f0"/></svg><svg class="abs" style="left:289px;top:57px" width="24" height="24" viewBox="0 0 24 24" fill="none" stroke="#c5c5c5" stroke-width="1.700" stroke-linecap="round"><path d="M2.500 12h19"/><rect x="8.700" y="4.200" width="6.600" height="15.600" rx="1.800" fill="#f0f0f0"/></svg><svg class="abs" style="left:331px;top:57px" width="24" height="24" viewBox="0 0 24 24" fill="none" stroke="#c5c5c5" stroke-width="1.700" stroke-linecap="round"><path d="M2.500 21.500h19"/><rect x="8.700" y="2.800" width="6.600" height="15.400" rx="1.800" fill="#f0f0f0"/></svg><div class="abs" style="left:15.2px;top:98px;width:98px;height:32px;border-radius:8px;background:#f5f5f5"></div><div class="abs" style="left:136.7px;top:98px;width:98px;height:32px;border-radius:8px;background:#f5f5f5"></div><div class="abs" style="left:15.2px;top:146px;width:98px;height:32px;border-radius:8px;background:#f5f5f5"></div><div class="abs" style="left:136.7px;top:146px;width:98px;height:32px;border-radius:8px;background:#f5f5f5"></div><div class="abs" style="left:258.2px;top:98px;width:98px;height:32px;border-radius:8px;background:#f5f5f5"></div><div class="abs" style="left:258.2px;top:146px;width:44.8px;height:32px;border-radius:8px;background:#f5f5f5"></div><div class="abs" style="left:311.4px;top:146px;width:44.8px;height:32px;border-radius:8px;background:#f5f5f5"></div><div class="t" style="left:96.8px;top:108px;font-size:13.5px;font-weight:bold;color:#8c8c8c">X</div><div class="t" style="left:218px;top:108px;font-size:13.5px;font-weight:bold;color:#8c8c8c">Y</div><div class="t" style="left:341.5px;top:107px;font-size:16.500px;font-weight:bold;color:#8c8c8c">&deg;</div><div class="t" style="left:92px;top:156px;font-size:13.5px;font-weight:bold;color:#8c8c8c">W</div><div class="t" style="left:216px;top:156px;font-size:13.5px;font-weight:bold;color:#8c8c8c">H</div><svg class="abs" style="left:268.6px;top:152px" width="24" height="20" viewBox="0 0 24 20" fill="#ededed" stroke="#c4c4c4" stroke-width="1.500" stroke-linejoin="round"><path d="M8.300 3.300H10.600V18.200H3.500z"/><path d="M16.100 3.300H13.800V18.200H20.900z"/></svg><svg class="abs" style="left:322.8px;top:150px" width="22" height="24" viewBox="0 0 22 24" fill="#ededed" stroke="#c4c4c4" stroke-width="1.500" stroke-linejoin="round"><path d="M3 4V11.400H19V10.200z"/><path d="M3 21.200V13.800H19V15z"/></svg><div class="abs" style="left:0;top:194.2px;width:373px;height:1.300px;background:#e9e9e9"></div></div>
</div>
</div></div>
</body></html>
